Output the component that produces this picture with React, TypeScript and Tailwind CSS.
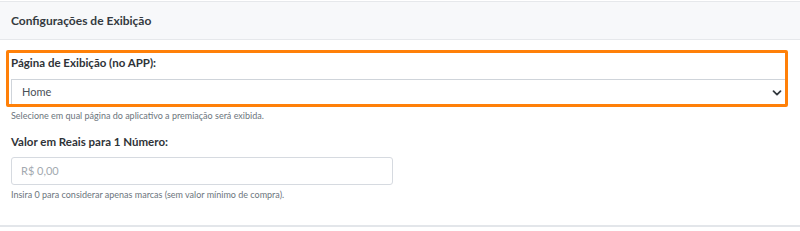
export default function App() {
  return (
    <div className="w-[800px] h-[231px] bg-white font-['Lato',sans-serif] overflow-hidden">
      <div className="border-b-2 border-[#e3e6ea]">
        {/* Card header */}
        <div className="h-[39px] mt-[1px] bg-[#f7f8fa] border-t border-b border-[#e6e8eb] flex items-center px-[11px]">
          <span className="text-[12px] font-bold text-[#343a40]">Configurações de Exibição</span>
        </div>

        <div className="pt-[10px] pb-[24px]">
          {/* Highlighted form group */}
          <div className="ml-[6px] w-[782px] border-[3px] border-[#ff8008] rounded-[2px] overflow-hidden pl-[2px]">
            <label className="block pt-[3px] pb-[9px] text-[11.5px] font-bold text-[#2f3338] leading-[14px]">
              Página de Exibição (no APP):
            </label>
            <div className="relative h-[25px] border-t border-l border-[#cfd4da] bg-white flex items-center pl-[10px]">
              <span className="text-[11px] text-[#495057]">Home</span>
              <svg className="absolute right-[3px] top-[8px] w-[10px] h-[10px]" viewBox="0 0 10 10" fill="none">
                <path d="M1.5 3.2 L5 6.6 L8.5 3.2" stroke="#343a40" strokeWidth="1.8" strokeLinecap="round" strokeLinejoin="round" />
              </svg>
            </div>
          </div>
          <p className="ml-[11px] mt-[3px] text-[9px] text-[#6c757d] leading-[12px]">
            Selecione em qual página do aplicativo a premiação será exibida.
          </p>

          <div className="px-[11px] mt-[13px]">
            <label className="block text-[11.5px] font-bold text-[#2f3338] leading-[14px]">
              Valor em Reais para 1 Número:
            </label>
            <div className="mt-[8px] w-[382px] h-[28px] border border-[#d6dae0] rounded-[3px] flex items-center pl-[9px]">
              <span className="text-[11px] text-[#a3a9b0]">R$ 0,00</span>
            </div>
            <p className="mt-[4px] text-[9px] text-[#6c757d] leading-[12px]">
              Insira 0 para considerar apenas marcas (sem valor mínimo de compra).
            </p>
          </div>
        </div>
      </div>
    </div>
  );
}
